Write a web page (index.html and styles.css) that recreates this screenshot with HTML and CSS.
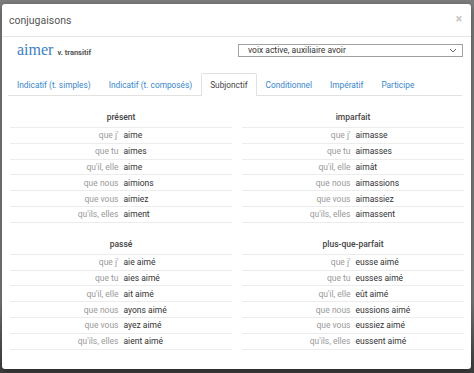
FILE: index.html
```html
<!DOCTYPE html>
<html lang="fr">
<head>
<meta charset="utf-8">
<title>conjugaisons</title>
<link rel="stylesheet" href="styles.css">
</head>
<body>
<div class="modal">
  <div class="modal-header">
    <h4 class="modal-title">conjugaisons</h4>
    <span class="close">×</span>
  </div>
  <div class="modal-body">
    <div class="verb-row">
      <div class="verb"><span class="verb-name">aimer</span><span class="verb-type">v. transitif</span></div>
      <div class="select">
        <span class="select-text">voix active, auxiliaire avoir</span>
        <svg class="select-arrow" width="8" height="5" viewBox="0 0 8 5"><path d="M1 1l3 3 3-3" fill="none" stroke="#666" stroke-width="1"/></svg>
      </div>
    </div>
    <ul class="tabs">
      <li class="tab">Indicatif (t. simples)</li>
      <li class="tab">Indicatif (t. composés)</li>
      <li class="tab active">Subjonctif</li>
      <li class="tab">Conditionnel</li>
      <li class="tab">Impératif</li>
      <li class="tab">Participe</li>
    </ul>
    <div class="tenses">
      <div class="tense">
        <div class="tense-title">présent</div>
        <div class="row"><span class="pron">que j'</span><span class="form">aime</span></div>
        <div class="row"><span class="pron">que tu</span><span class="form">aimes</span></div>
        <div class="row"><span class="pron">qu'il, elle</span><span class="form">aime</span></div>
        <div class="row"><span class="pron">que nous</span><span class="form">aimions</span></div>
        <div class="row"><span class="pron">que vous</span><span class="form">aimiez</span></div>
        <div class="row"><span class="pron">qu'ils, elles</span><span class="form">aiment</span></div>
      </div>
      <div class="tense">
        <div class="tense-title">imparfait</div>
        <div class="row"><span class="pron">que j'</span><span class="form">aimasse</span></div>
        <div class="row"><span class="pron">que tu</span><span class="form">aimasses</span></div>
        <div class="row"><span class="pron">qu'il, elle</span><span class="form">aimât</span></div>
        <div class="row"><span class="pron">que nous</span><span class="form">aimassions</span></div>
        <div class="row"><span class="pron">que vous</span><span class="form">aimassiez</span></div>
        <div class="row"><span class="pron">qu'ils, elles</span><span class="form">aimassent</span></div>
      </div>
      <div class="tense">
        <div class="tense-title">passé</div>
        <div class="row"><span class="pron">que j'</span><span class="form">aie aimé</span></div>
        <div class="row"><span class="pron">que tu</span><span class="form">aies aimé</span></div>
        <div class="row"><span class="pron">qu'il, elle</span><span class="form">ait aimé</span></div>
        <div class="row"><span class="pron">que nous</span><span class="form">ayons aimé</span></div>
        <div class="row"><span class="pron">que vous</span><span class="form">ayez aimé</span></div>
        <div class="row"><span class="pron">qu'ils, elles</span><span class="form">aient aimé</span></div>
      </div>
      <div class="tense">
        <div class="tense-title">plus-que-parfait</div>
        <div class="row"><span class="pron">que j'</span><span class="form">eusse aimé</span></div>
        <div class="row"><span class="pron">que tu</span><span class="form">eusses aimé</span></div>
        <div class="row"><span class="pron">qu'il, elle</span><span class="form">eût aimé</span></div>
        <div class="row"><span class="pron">que nous</span><span class="form">eussions aimé</span></div>
        <div class="row"><span class="pron">que vous</span><span class="form">eussiez aimé</span></div>
        <div class="row"><span class="pron">qu'ils, elles</span><span class="form">eussent aimé</span></div>
      </div>
    </div>
  </div>
</div>
</body>
</html>
```

FILE: styles.css
```css
html, body {
  margin: 0;
  padding: 0;
}
body {
  width: 474px;
  height: 373px;
  overflow: hidden;
  background: linear-gradient(to bottom, #7d7d7d 0, #7d7d7d 300px, #3e3e3e 373px);
  font-family: Roboto, "Liberation Sans", sans-serif;
  font-size: 8.5px;
  color: #333;
}
.modal {
  margin: 4px 3px 0 2px;
  height: 365px;
  background: #fff;
  border-radius: 3px;
  box-shadow: 0 2px 6px rgba(0,0,0,0.4);
  overflow: hidden;
}
.modal-header {
  height: 32px;
  border-bottom: 1px solid #e5e5e5;
  display: flex;
  align-items: center;
  justify-content: space-between;
  padding: 0 9px 0 7px;
}
.modal-title {
  margin: 0;
  font-size: 10.5px;
  font-weight: 400;
  color: #555;
}
.close {
  font-size: 12px;
  color: #c4c4c4;
  font-weight: 700;
  line-height: 1;
  margin-top: -3px;
}
.modal-body {
  padding: 0 7px 0 6px;
}
.verb-row {
  height: 26px;
  display: flex;
  align-items: center;
  justify-content: space-between;
}
.verb {
  padding-left: 9px;
  display: flex;
  align-items: baseline;
}
.verb-name {
  font-family: "Liberation Serif", serif;
  font-size: 16px;
  color: #3b80c2;
}
.verb-type {
  font-size: 7.5px;
  font-weight: 700;
  color: #555;
  margin-left: 4px;
}
.select {
  width: 225px;
  height: 13px;
  border: 1px solid #a0a0a0;
  box-sizing: border-box;
  display: flex;
  align-items: center;
  justify-content: space-between;
  padding: 0 5px 0 9px;
  margin-right: 1px;
}
.select-text {
  font-size: 8.5px;
  color: #333;
}
.select-arrow {
  display: block;
}
.tabs {
  list-style: none;
  margin: 10px 2px 0 0;
  padding: 0;
  display: flex;
  border-bottom: 1px solid #e2e2e2;
  font-size: 8.3px;
}
.tab {
  height: 22px;
  line-height: 22px;
  padding: 0 8px;
  color: #3a87c8;
  border: 1px solid transparent;
  border-bottom: none;
  box-sizing: border-box;
  margin-bottom: -1px;
}
.tab.active {
  color: #444;
  background: #fff;
  border-color: #e2e2e2;
  height: 23px;
  border-radius: 2px 2px 0 0;
}
.tenses {
  display: grid;
  grid-template-columns: 1fr 1fr;
  column-gap: 10px;
  row-gap: 14px;
  margin: 14px 0 0 2px;
}
.tense-title {
  text-align: center;
  font-weight: 500;
  color: #444;
  line-height: 14px;
  padding-bottom: 3px;
  border-bottom: 1px solid #ececec;
}
.row {
  display: flex;
  height: 15.8px;
  align-items: center;
  border-bottom: 1px solid #ececec;
  box-sizing: border-box;
}
.pron {
  width: 50%;
  text-align: right;
  padding-right: 2.5px;
  color: #9a9a9a;
  box-sizing: border-box;
}
.form {
  width: 50%;
  padding-left: 2.5px;
  color: #333;
  box-sizing: border-box;
}
```
